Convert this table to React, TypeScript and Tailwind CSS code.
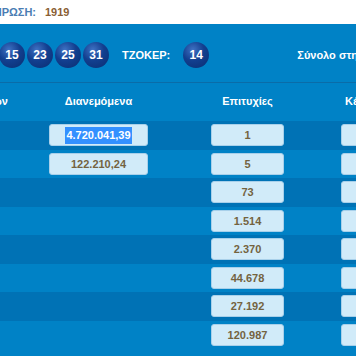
const balls = ["15", "23", "25", "31"];

const rows = [
  { amount: "4.720.041,39", wins: "1", selected: true },
  { amount: "122.210,24", wins: "5" },
  { amount: "", wins: "73" },
  { amount: "", wins: "1.514" },
  { amount: "", wins: "2.370" },
  { amount: "", wins: "44.678" },
  { amount: "", wins: "27.192" },
  { amount: "", wins: "120.987" },
];

function Ball({ n }: { n: string }) {
  return (
    <div className="flex h-[26px] w-[26px] shrink-0 items-center justify-center rounded-full bg-[radial-gradient(circle_at_38%_30%,#3f72c4_0%,#123f8f_45%,#0a2d70_100%)] text-[12px] font-bold text-white">
      {n}
    </div>
  );
}

function Box({ children, width }: { children?: React.ReactNode; width: string }) {
  return (
    <div
      className={`flex h-[22px] ${width} shrink-0 items-center justify-center rounded-[3px] border border-[#a8d0ea] bg-[#d1ebf9] text-[11px] font-bold text-[#74633f]`}
    >
      {children}
    </div>
  );
}

export default function App() {
  return (
    <div className="h-[364px] w-[356px] overflow-hidden bg-white font-['Liberation_Sans',Arial,sans-serif]">
      {/* draw info */}
      <div className="flex h-[24px] items-center text-[11px] font-bold">
        <div className="flex w-[36px] shrink-0 justify-end overflow-hidden whitespace-nowrap text-[#4a7db3]">
          ΚΛΗΡΩΣΗ:
        </div>
        <span className="ml-[9px] text-[#8a5e33]">1919</span>
      </div>

      <div className="bg-[#0082c6] pb-[7px]">
        {/* numbers */}
        <div className="flex h-[58px] items-center overflow-hidden whitespace-nowrap pt-[4px]">
          <div className="-ml-px flex shrink-0 gap-[2px]">
            {balls.map((b) => (
              <Ball key={b} n={b} />
            ))}
          </div>
          <span className="ml-[13px] shrink-0 text-[11px] font-bold text-white">ΤΖΟΚΕΡ:</span>
          <div className="ml-[13px] shrink-0">
            <Ball n="14" />
          </div>
          <span className="ml-[88px] shrink-0 text-[11px] font-bold text-white">Σύνολο στην κλήρωση</span>
        </div>

        {/* header */}
        <div className="flex h-[39px] items-center overflow-hidden whitespace-nowrap border-t border-[#0a6ca8] pb-[2px] text-[11px] font-bold text-white">
          <div className="flex w-[20px] shrink-0 justify-end overflow-hidden pr-[12px]">Επιτυχιών</div>
          <div className="flex w-[157px] shrink-0 justify-center">Διανεμόμενα</div>
          <div className="flex w-[141px] shrink-0 justify-center">Επιτυχίες</div>
          <div className="shrink-0 pl-[27px]">Κέρδη ανά επιτυχία</div>
        </div>

        {/* rows */}
        {rows.map((r, i) => (
          <div
            key={i}
            className={`flex h-[28.5px] items-center overflow-hidden ${i % 2 === 0 ? "bg-[#0072b5]" : "bg-[#0082c6]"}`}
          >
            <div className="w-[49px] shrink-0" />
            {r.amount ? (
              <Box width="w-[99px]">
                {r.selected ? (
                  <span className="bg-[#3390ff] px-px text-white">{r.amount}</span>
                ) : (
                  r.amount
                )}
              </Box>
            ) : (
              <div className="w-[99px] shrink-0" />
            )}
            <div className="w-[63px] shrink-0" />
            <Box width="w-[73px]">{r.wins}</Box>
            <div className="w-[57px] shrink-0" />
            <Box width="w-[73px]" />
          </div>
        ))}
      </div>
    </div>
  );
}
